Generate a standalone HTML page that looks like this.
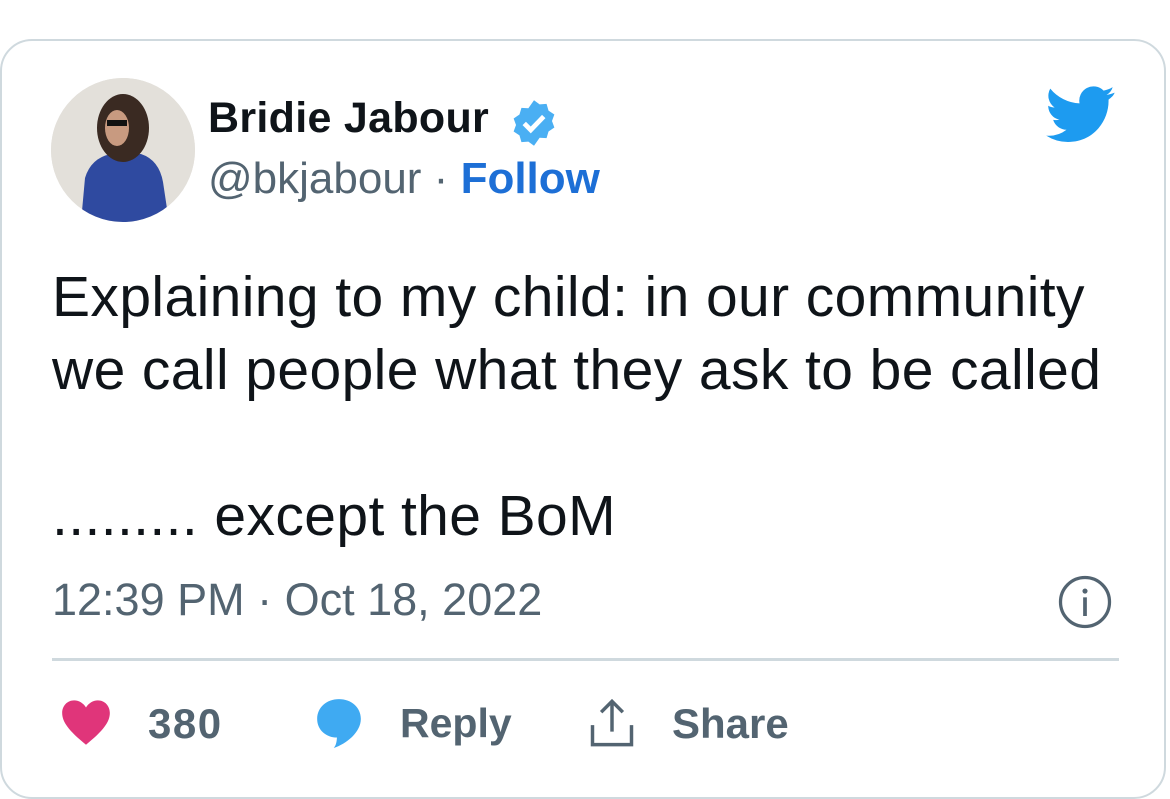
<!DOCTYPE html>
<html><head><meta charset="utf-8"><style>
body{margin:0;width:1170px;height:773px;background:#fff;overflow:hidden;font-family:"Liberation Sans",Arial,sans-serif;position:relative}
.card{position:absolute;left:0;top:39px;width:1166px;height:760px;border:2px solid #cfd9de;border-radius:32px;box-sizing:border-box}
.abs{position:absolute;white-space:nowrap}
.av{left:51px;top:78px;width:144px;height:144px;border-radius:50%;background:#e4e1dc;overflow:hidden}
</style></head><body>
<div class="card"></div>
<div class="abs av">
<svg width="144" height="144" viewBox="0 0 144 144">
<rect width="144" height="144" fill="#e3e0da"/>
<path d="M30 144 L34 100 Q40 80 60 76 L90 76 Q108 82 112 104 L118 144Z" fill="#2f4aa0"/>
<ellipse cx="72" cy="50" rx="26" ry="34" fill="#3a2a22"/>
<ellipse cx="66" cy="50" rx="12" ry="18" fill="#c89a80"/>
<rect x="56" y="42" width="20" height="6" fill="#111"/>
</svg></div>
<div class="abs" style="left:208px;top:94px;font-size:43px;font-weight:bold;color:#0f1419;letter-spacing:0.3px">Bridie Jabour</div>
<svg class="abs" style="left:508px;top:97px" width="52" height="52" viewBox="0 0 24 24"><path fill="#1d9bf0" d="M12 1.5l2.6 1.9 3.2-.2.9 3.1 2.7 1.8-1.1 3 1.1 3-2.7 1.8-.9 3.1-3.2-.2L12 22.5l-2.6-1.9-3.2.2-.9-3.1-2.7-1.8 1.1-3-1.1-3 2.7-1.8.9-3.1 3.2.2z" opacity=".8"/><path d="M7.5 12.2l3 3 6-6.2" stroke="#fff" stroke-width="2.2" fill="none"/></svg>
<div class="abs" style="left:208px;top:154px;font-size:44px;color:#536471">@bkjabour · <span style="color:#1d6fd6;font-weight:bold">Follow</span></div>
<svg class="abs" style="left:1046px;top:86px" width="70" height="58" viewBox="0 0 24 20"><path fill="#1d9bf0" d="M23.6 2.3c-.9.4-1.8.6-2.8.8 1-.6 1.8-1.5 2.1-2.7-.9.6-2 1-3.1 1.2A4.9 4.9 0 0 0 11.5 6 13.9 13.9 0 0 1 1.4.9a4.9 4.9 0 0 0 1.5 6.5c-.8 0-1.6-.2-2.2-.6 0 2.4 1.7 4.4 3.9 4.8-.7.2-1.5.2-2.2.1a4.9 4.9 0 0 0 4.6 3.4A9.8 9.8 0 0 1 0 17.1 13.9 13.9 0 0 0 7.5 19.3c9 0 14-7.5 14-14v-.6c1-.7 1.8-1.5 2.1-2.4z"/></svg>
<div class="abs" style="left:52px;top:261px;font-size:57px;line-height:73px;color:#0f1419;letter-spacing:0.4px">Explaining to my child: in our community<br>we call people what they ask to be called<br><br>......... except the BoM</div>
<div class="abs" style="left:52px;top:574px;font-size:45px;color:#536471">12:39 PM · Oct 18, 2022</div>
<svg class="abs" style="left:1057px;top:574px" width="56" height="56" viewBox="0 0 24 24"><circle cx="12" cy="12" r="10.5" fill="none" stroke="#536471" stroke-width="1.4"/><circle cx="12" cy="7.3" r="1.1" fill="#536471"/><path d="M12 10v8" stroke="#536471" stroke-width="1.6"/></svg>
<div class="abs" style="left:52px;top:658px;width:1067px;height:3px;background:#cfd9de"></div>
<svg class="abs" style="left:60px;top:698px" width="52" height="48" viewBox="0 0 24 22"><path fill="#e0357a" d="M12 21.5C4 15 1 11 1 6.8 1 3.5 3.4 1 6.5 1 8.8 1 10.9 2.4 12 4.3 13.1 2.4 15.2 1 17.5 1 20.6 1 23 3.5 23 6.8 23 11 20 15 12 21.5z"/></svg>
<div class="abs" style="left:148px;top:700px;font-size:42px;font-weight:bold;color:#536471;letter-spacing:1.5px">380</div>
<svg class="abs" style="left:314px;top:697px" width="50" height="52" viewBox="0 0 24 25"><path fill="#1d9bf0" opacity=".85" d="M12 1C6 1 1.5 5 1.5 10.5S6 19.5 11 19.5c0 0 0 3.5-1.5 5 6-2 13-7.5 13-14C22.5 5 18 1 12 1z"/></svg>
<div class="abs" style="left:400px;top:700px;font-size:41px;font-weight:bold;color:#536471">Reply</div>
<svg class="abs" style="left:585px;top:697px" width="54" height="52" viewBox="0 0 24 24"><path d="M12 2v14M7 7l5-5 5 5M3 13v9h18v-9" fill="none" stroke="#536471" stroke-width="1.6"/></svg>
<div class="abs" style="left:672px;top:700px;font-size:42px;font-weight:bold;color:#536471">Share</div>
</body></html>
